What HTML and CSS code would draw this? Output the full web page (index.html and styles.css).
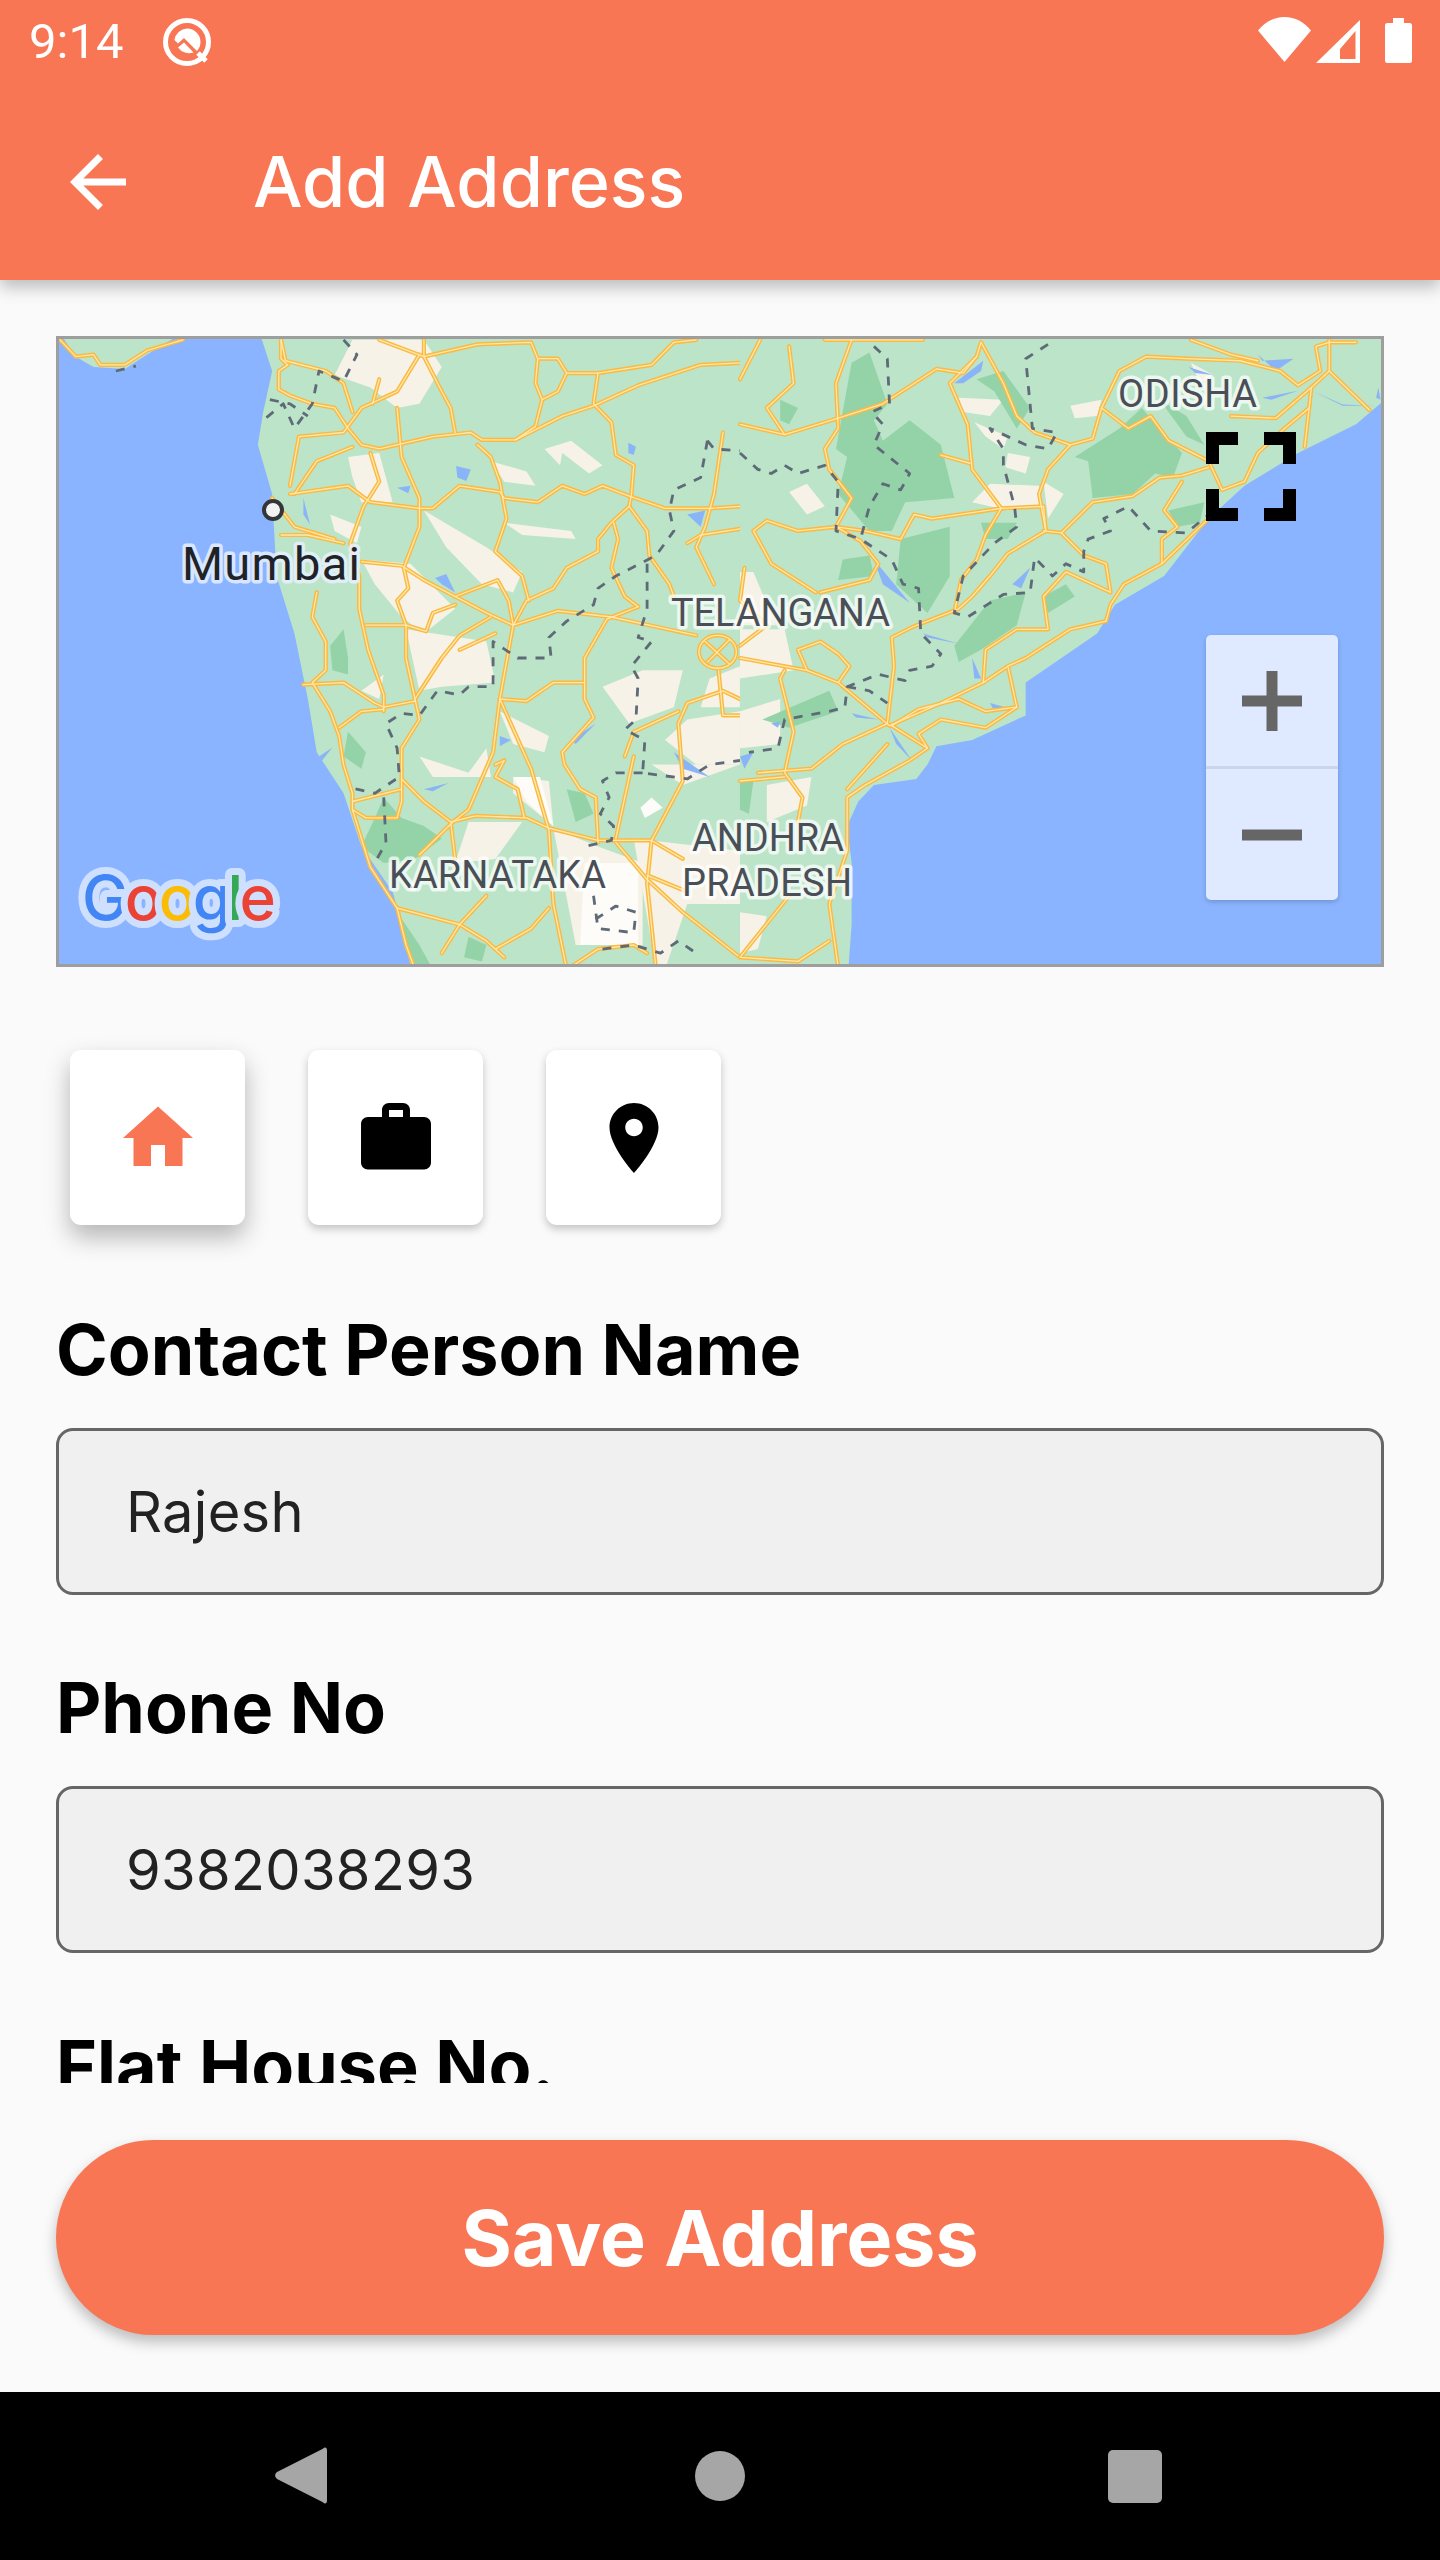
FILE: index.html
```html
<!DOCTYPE html>
<html lang="en">
<head>
<meta charset="utf-8">
<title>Add Address</title>
<link rel="stylesheet" href="styles.css">
</head>
<body>
<div class="screen">
  <header class="topbar">
    <div class="status">
      <div class="status-left">
        <span class="time">9:14</span>
        <svg class="q-icon" viewBox="0 0 50 48"><circle class="q-ring" cx="25" cy="24" r="21.5"/><path class="q-fill" d="M25 10.500a13.500 13.500 0 0 1 13.500 13.500c0 3.500-1.300 6.500-3.500 9L22 20l-6 5.500-3.600-3.600A13.500 13.500 0 0 1 25 10.500z"/><path class="q-fill" d="M22 24.500 31.500 34.500A13.500 13.500 0 0 1 16 29.500z"/><path class="q-tail" d="M36 35 44 43"/></svg>
      </div>
      <div class="status-right">
        <svg class="wifi" viewBox="0 0 53 45"><path d="M0 13.500C7 5 16 0 26.500 0S46 5 53 13.500L26.500 45z"/></svg>
        <svg class="signal" viewBox="0 0 44 43"><path fill-rule="evenodd" d="M44 0v43H0zM39.500 11 24 29v10h15.500z"/></svg>
        <svg class="battery" viewBox="0 0 27 45"><path d="M8 0h11v5h5.500a2.500 2.500 0 0 1 2.500 2.500V42.500a2.500 2.500 0 0 1-2.500 2.500h-22A2.500 2.500 0 0 1 0 42.500V7.500A2.500 2.500 0 0 1 2.500 5H8z"/></svg>
      </div>
    </div>
    <div class="appbar">
      <svg class="back" viewBox="0 0 24 24"><path d="M20 11H7.830l5.590-5.590L12 4l-8 8 8 8 1.410-1.410L7.830 13H20v-2z"/></svg>
      <h1 class="title">Add Address</h1>
    </div>
  </header>

  <main class="content">
    <div class="map">
      <svg class="map-svg" viewBox="59 339 1322 625" preserveAspectRatio="none">
        <defs>
          <g id="roads-left" class="roads">
            <polyline points="540,24 540,70 555,85 535,100 535,145 560,160 610,180 660,190 690,240 720,280 760,290 880,260 965,250 990,268 1065,268 1170,210 1240,185 1340,135 1480,85 1568,80"/>
            <polyline points="860,24 860,65 900,150 920,190 930,250"/>
            <polyline points="760,24 860,65 980,35 1100,30 1115,70 1160,70 1180,105 1160,150 1125,170 1110,235 1065,268"/>
            <polyline points="1115,70 1110,130 1125,170"/>
            <polyline points="1180,105 1250,105 1370,85 1420,30 1470,24"/>
            <polyline points="1250,105 1240,180 1280,225 1290,305 1330,330 1325,400 1320,430 1280,470 1250,510 1250,540 1180,580 1150,630 1090,660 1060,720"/>
            <polyline points="1320,430 1360,490 1365,550 1410,620 1420,650"/>
            <polyline points="1285,470 1295,510 1280,580 1310,650 1340,675"/>
            <polyline points="560,400 690,380 740,420 850,435 880,435 940,380 1030,395 1040,410 1115,420 1170,380 1220,400 1260,380 1320,405 1400,435 1500,435 1568,430"/>
            <polyline points="800,190 810,310 850,410 850,480 815,580 825,630 800,660 820,720 820,800 840,900"/>
            <polyline points="740,300 760,370 725,430 695,520 715,600 715,680 735,780 770,890 770,930"/>
            <polyline points="980,280 1010,310 1030,370 1045,460 1020,540 1080,600 1095,660"/>
            <polyline points="720,565 810,575 860,610 1000,690 1060,720 1160,685 1280,700 1470,745"/>
            <polyline points="930,650 1025,610 1050,660 1060,720 1030,900 1015,1030 960,1170 925,1200 850,1280"/>
            <polyline points="1030,900 1090,905 1150,860 1220,860 1220,900 1240,945 1170,1030 1175,1060 1210,1120 1245,1140 1250,1250"/>
            <polyline points="1340,675 1270,705 1220,800 1220,860"/>
            <polyline points="730,720 820,720 865,735 880,690 930,670"/>
            <polyline points="840,900 900,800 940,745 1010,700"/>
            <polyline points="940,780 1020,740"/>
            <polyline points="590,865 680,860 750,910 770,920 840,905"/>
            <polyline points="620,640 610,700 640,760 640,830 610,860 650,930 670,990 680,1060 700,1130 700,1170 730,1190 800,1190 810,1150 810,1020 850,950 840,900"/>
            <polyline points="770,925 720,930 670,970"/>
            <polyline points="810,1095 860,1150 920,1200 975,1185 1090,1190 1140,1215 1250,1245 1370,1245 1440,1290"/>
            <polyline points="1030,900 1100,1070 1140,1220 1150,1400 1180,1560"/>
            <polyline points="1370,1245 1360,1350 1380,1560"/>
            <polyline points="1370,1245 1440,1100 1430,960 1450,910 1530,880 1568,900"/>
            <polyline points="1310,1040 1330,980 1430,930"/>
            <polyline points="1290,1240 1330,1040"/>
            <polyline points="1450,520 1480,500 1568,485"/>
            <polyline points="1530,250 1510,400 1490,480 1470,530 1510,620"/>
            <polyline points="700,1150 810,1120"/>
            <polyline points="570,400 620,320 700,285"/>
            <polyline points="560,380 580,260 680,250 720,190 800,150 850,60"/>
            <polyline points="540,500 600,500 680,520"/>
            <polyline points="520,410 570,480 660,510"/>
            <polyline points="1520,830 1530,940 1568,940"/>
            <polyline points="700,1170 740,1310 800,1410 820,1500 840,1560"/>
            <polyline points="800,1410 940,1450 1000,1490 1040,1530"/>
            <polyline points="920,1200 930,1290"/>
            <polyline points="1020,1060 1040,1050 1020,1090 1070,1120 1085,1190"/>
            <polyline points="1000,1380 940,1450 900,1520"/>
            <polyline points="1140,1410 1100,1460 1020,1510"/>
            <polyline points="1290,1250 1360,1340 1440,1420 1568,1530"/>
            <polyline points="1450,1370 1360,1330"/>
            <polyline points="45,24 80,65 120,60 135,85 190,85 240,50 320,24"/>
            <polyline points="760,120 745,180"/>
            <polyline points="540,24 550,75 640,100 680,130 700,200"/>
            <ellipse cx="1518" cy="785" rx="42" ry="40"/>
            <polyline points="1490,760 1545,815"/>
            <polyline points="1545,755 1495,810"/>
            <polyline points="1180,1560 1250,1510 1330,1500 1360,1520"/>
          </g>
          <g id="roads-right" class="roads">
            <polyline points="190,24 410,24"/>
            <polyline points="250,24 215,130 220,240 190,290 200,340 250,410 215,480 270,515 310,570 290,610 180,640"/>
            <polyline points="0,230 100,255 220,215 320,180 440,95 500,105 530,65 540,30 590,130 620,210 660,250 740,280 690,340 670,400 685,490 600,545 560,600 520,650 490,680 385,725 340,750 345,820 330,960 230,1010 160,1070 40,1080"/>
            <polyline points="530,65 470,130 510,230 520,340 585,435 680,430 685,490"/>
            <polyline points="585,435 430,460 390,450 360,510 280,490 215,480 130,490 60,465 30,490 70,570 170,640"/>
            <polyline points="585,435 550,500 530,560 495,610 480,690"/>
            <polyline points="740,280 790,265 810,190 850,100 910,65 1000,70 1120,75 1210,100 1250,135 1300,100 1290,40 1320,30 1380,30"/>
            <polyline points="810,190 870,240 920,210 960,270 1050,320 1080,390 1130,370 1160,300 1220,240 1275,190 1280,140"/>
            <polyline points="1010,24 1100,60 1160,75"/>
            <polyline points="1320,100 1280,140 1200,215 1100,210"/>
            <polyline points="1320,100 1410,195"/>
            <polyline points="1320,100 1320,24"/>
            <polyline points="1275,190 1265,285"/>
            <polyline points="680,490 720,495 790,420 880,405 940,360 990,355 1050,335"/>
            <polyline points="990,370 950,440 980,480 945,510 945,570"/>
            <polyline points="1050,460 945,570 860,620 830,670 820,710 740,730 640,800 600,820 545,860 450,910 335,965"/>
            <polyline points="720,495 770,550 820,570 830,640 730,590 680,650 690,730 620,730 550,780 545,860"/>
            <polyline points="600,820 620,920 550,970 450,950 400,985 420,1020 380,1050 280,1110 240,1140 240,1270 200,1400 220,1555"/>
            <polyline points="620,920 550,930 490,900 400,925 340,965 420,1020"/>
            <polyline points="335,965 220,860 150,830 130,780 180,760 220,790 245,820 220,860"/>
            <polyline points="0,800 150,830"/>
            <polyline points="330,1010 240,1120"/>
            <polyline points="100,830 90,850 120,980 100,1080 140,1140 130,1200"/>
            <polyline points="0,1100 100,1090"/>
            <polyline points="45,24 0,120"/>
            <polyline points="110,40 120,130 60,190 100,255"/>
            <polyline points="10,580 0,660 60,720 0,770"/>
            <polyline points="450,305 515,325"/>
            <polyline points="110,1380 0,1530 130,1540 200,1490"/>
          </g>
        </defs>

        <rect class="sea" x="59" y="339" width="1322" height="625"/>

        <g transform="matrix(.4464 0 0 .41 40 330)">
          <polygon class="land" points="490,0 520,100 500,200 488,280 520,400 530,600 570,740 600,900 620,1030 680,1130 720,1260 790,1370 810,1450 840,1600 1568,1600 1568,0"/>
          <polygon class="land" points="40,0 80,65 120,90 190,95 240,60 330,0"/>
          <g class="beige">
            <polygon points="700,24 860,24 900,90 850,180 800,190 740,140 660,110"/>
            <polygon points="690,310 760,300 790,420 720,420 700,360"/>
            <polygon points="1130,290 1190,270 1260,330 1230,350 1170,300 1165,330"/>
            <polygon points="1010,320 1090,345 1110,380 1040,370"/>
            <polygon points="860,440 1000,530 1080,590 1060,640 990,620 910,530"/>
            <polygon points="1040,470 1190,490 1200,510 1080,500"/>
            <polygon points="720,560 830,570 930,680 860,740 810,700 750,620"/>
            <polygon points="820,730 1000,760 1020,860 900,870 850,880"/>
            <polygon points="1260,870 1350,830 1440,830 1420,920 1320,960"/>
            <polygon points="1030,930 1140,990 1130,1030 1060,1010"/>
            <polygon points="850,1040 960,1080 1000,1020 1010,1090 880,1090"/>
            <polygon points="1060,1090 1140,1100 1150,1210 1060,1130"/>
            <polygon points="1150,1215 1250,1260 1350,1300 1350,1500 1200,1500"/>
            <polygon points="1400,1000 1450,950 1568,930 1568,1060 1470,1060"/>
            <polygon points="1500,850 1568,820 1568,920 1480,920"/>
            <polygon points="650,450 720,480 710,520 660,490"/>
            <polygon points="720,880 770,840 760,900"/>
            <polygon points="1330,1240 1568,1270 1568,1400 1450,1400 1400,1560 1380,1560"/>
            <polygon points="960,1200 1080,1200 1020,1290 930,1300"/>
            <polygon points="1370,1060 1450,1060 1568,1060 1440,1110"/>
          </g>
          <polygon class="white" points="1060,1090 1120,1090 1150,1210 1090,1150"/>
          <polygon class="white" points="1220,1300 1340,1300 1340,1500 1210,1500"/>
          <polygon class="white" points="1370,1140 1395,1165 1355,1190 1345,1165"/>
          <g class="forest">
            <polygon points="680,730 690,800 690,840 655,830 650,770"/>
            <polygon points="690,980 730,1030 720,1070 680,1040"/>
            <polygon points="770,1140 810,1190 860,1210 900,1240 840,1290 770,1300 720,1260 750,1190"/>
            <polygon points="800,1420 850,1500 880,1560 840,1560"/>
            <polygon points="960,1480 1000,1500 990,1540 950,1530"/>
            <polygon points="1180,1120 1220,1130 1240,1180 1200,1200"/>
          </g>
          <g class="water">
            <polygon points="932,332 965,340 955,368 935,360"/>
            <polygon points="1318,275 1335,285 1330,305 1318,300"/>
            <polygon points="800,385 830,380 825,398"/>
            <polygon points="590,410 605,475 590,450"/>
            <polygon points="1450,450 1490,440 1480,480"/>
            <polygon points="885,605 910,595 930,640 900,620"/>
            <polygon points="860,1120 915,1105 880,1125"/>
            <polygon points="1030,990 1055,1000 1030,1015"/>
            <polygon points="1420,1030 1500,1090 1440,1070"/>
            <polygon points="1190,1000 1245,960 1200,1010"/>
            <polygon points="625,1040 655,1018 632,1050"/>
          </g>
          <use href="#roads-left" class="road-casing"/>
          <use href="#roads-left" class="road-core"/>
          <g class="border-line">
            <polyline points="680,24 710,60 680,125 625,100 610,180 570,240 545,180 500,220"/>
            <polyline points="515,170 560,180 600,210"/>
            <polyline points="1495,270 1510,290 1568,295"/>
            <polyline points="1495,270 1480,360 1420,390 1410,440 1420,490 1380,550 1290,600 1250,630 1240,670 1180,710 1140,750 1145,800 1070,800 1015,760 1015,870 960,870 940,890 890,880 850,940 810,935 775,960 800,1020 805,1090 750,1130 690,1115"/>
            <polyline points="1360,570 1360,680 1340,750 1370,760 1325,820 1340,850 1335,950 1310,975 1355,1000 1350,1080 1450,1095 1500,1060 1568,1050"/>
            <polyline points="1350,1080 1290,1080 1260,1100 1275,1140 1255,1180 1285,1210 1280,1245 1220,1260"/>
            <polyline points="770,1140 775,1250 750,1300"/>
            <polyline points="1240,1380 1250,1460 1330,1470 1335,1420 1290,1405 1240,1440"/>
            <polyline points="1260,1510 1330,1500 1390,1520 1430,1490 1470,1520"/>
            <polyline points="170,100 215,88"/>
          </g>
        </g>

        <g transform="matrix(.4464 0 0 .41 740 330)">
          <polygon class="land" points="0,0 1450,0 1450,1600 0,1600"/>
          <polygon class="sea" points="1450,165 1380,230 1250,300 1130,380 1050,460 950,600 840,670 800,740 640,860 640,940 520,1000 440,1015 420,1060 395,1095 300,1110 265,1150 240,1210 250,1300 250,1450 240,1600 1450,1600"/>
          <g class="beige">
            <polygon points="740,185 810,170 800,210 750,215"/>
            <polygon points="490,165 590,170 560,210 500,200"/>
            <polygon points="525,225 600,260 590,290 550,260"/>
            <polygon points="600,300 650,310 640,350 595,335"/>
            <polygon points="520,420 560,375 670,380 680,430 600,440"/>
            <polygon points="680,370 725,400 690,460"/>
            <polygon points="110,395 150,375 190,430 150,450"/>
            <polygon points="0,590 30,590 80,720 0,720"/>
            <polygon points="0,730 100,730 120,830 0,850"/>
            <polygon points="0,930 90,900 90,1010 0,1020"/>
            <polygon points="60,1110 160,1090 150,1160 60,1200"/>
            <polygon points="0,1420 60,1430 40,1510 0,1520"/>
            <polygon points="1010,80 1060,110 1030,130"/>
          </g>
          <g class="forest">
            <polygon points="250,80 290,55 330,180 300,220 320,270 380,220 450,280 480,410 370,420 340,490 290,490 220,400 240,310 215,290"/>
            <polygon points="530,120 590,100 650,190 620,240 570,150"/>
            <polygon points="850,240 900,190 990,300 970,360 930,350 880,400 790,410 780,320 750,310"/>
            <polygon points="480,770 560,660 640,640 620,720 540,780 490,810"/>
            <polygon points="360,510 470,480 470,600 420,690 350,620"/>
            <polygon points="230,560 290,550 300,600 220,610"/>
            <polygon points="540,470 620,470 600,510 550,510"/>
            <polygon points="680,650 730,620 750,650 690,690"/>
            <polygon points="90,170 130,190 110,230 90,220"/>
            <polygon points="0,1100 30,1100 20,1180 0,1170"/>
            <polygon points="960,440 1040,420 1030,470 980,480"/>
            <polygon points="50,950 200,880 220,930 110,970"/>
            <polygon points="940,170 1000,210 1040,280 1000,260"/>
          </g>
          <g class="water">
            <polygon points="480,130 545,75 540,100 500,130"/>
            <polygon points="300,560 380,665 320,620"/>
            <polygon points="610,620 650,580 630,630"/>
            <polygon points="520,800 540,850 525,850"/>
            <polygon points="250,935 310,950 260,945"/>
            <polygon points="335,970 385,1050 350,1010"/>
            <polygon points="1170,165 1250,148 1190,170"/>
            <polygon points="1285,150 1350,182 1420,185 1350,185"/>
            <polygon points="1160,60 1170,75 1240,70 1200,100"/>
            <polygon points="1005,90 1060,110 1020,105"/>
            <polygon points="1430,140 1435,170 1425,165"/>
            <polygon points="410,740 490,765 420,750"/>
            <polygon points="70,960 90,955 85,970"/>
            <polygon points="0,1040 30,1030 10,1070"/>
            <polygon points="560,910 610,925 570,930"/>
          </g>
          <use href="#roads-right" class="road-casing"/>
          <use href="#roads-right" class="road-core"/>
          <g class="border-line">
            <polyline points="300,40 330,70 335,180 295,200 320,230 300,280 380,350 360,390 320,375 290,430 270,510 340,560 365,620 400,630 405,740 450,790 430,820 380,830 370,855 310,840 240,870 235,920 200,930 100,950 85,1020 20,1030"/>
            <polyline points="0,300 40,340 70,350 100,330 130,350 190,330 220,370 215,490 270,510"/>
            <polyline points="690,35 640,70 655,240 710,250 690,290 640,280 560,240 590,290 590,330 615,430 620,480 570,520 500,600 480,690 510,700 590,645 650,640 660,555 700,600 730,570 770,590 770,540 780,510 830,490 815,460 870,430 920,490 1000,495 1050,450"/>
            <polyline points="240,870 290,880 330,910"/>
          </g>
        </g>

        <g class="label-sm">
          <text x="671" y="626" textLength="219">TELANGANA</text>
          <text x="389" y="888" textLength="217">KARNATAKA</text>
          <text x="1118" y="407" textLength="139">ODISHA</text>
          <text x="692" y="851" textLength="152">ANDHRA</text>
          <text x="682" y="896" textLength="170">PRADESH</text>
        </g>
        <circle class="city-dot" cx="273" cy="510" r="9"/>
        <text class="label-lg" x="182" y="580" textLength="178">Mumbai</text>
        <text class="google" x="82" y="920" textLength="194"><tspan class="g-blue">G</tspan><tspan class="g-red">o</tspan><tspan class="g-yellow">o</tspan><tspan class="g-blue">g</tspan><tspan class="g-green">l</tspan><tspan class="g-red">e</tspan></text>
      </svg>

      <svg class="fullscreen" viewBox="0 0 90 89"><path d="M0 0h32v13H13v19H0zM58 0h32v32H77V13H58zM0 57h13v19h19v13H0zM77 57h13v32H58V76h19z"/></svg>

      <div class="zoom-ctrl">
        <div class="zoom-btn"><svg class="zoom-glyph" viewBox="0 0 60 60"><path d="M24.500 0h11v24.500H60v11H35.500V60h-11V35.500H0v-11h24.500z"/></svg></div>
        <div class="zoom-btn"><svg class="zoom-glyph" viewBox="0 0 60 60"><path d="M0 24.500h60v11H0z"/></svg></div>
      </div>
    </div>

    <div class="types">
      <button class="type type-active"><svg class="type-icon icon-orange" viewBox="0 0 24 24"><path d="M10 20v-6h4v6h5v-8h3L12 3 2 12h3v8z"/></svg></button>
      <button class="type"><svg class="type-icon" viewBox="0 0 24 24"><path d="M20 6h-4V4c0-1.110-.89-2-2-2h-4c-1.110 0-2 .89-2 2v2H4c-1.110 0-1.990.89-1.990 2L2 19c0 1.110.89 2 2 2h16c1.110 0 2-.89 2-2V8c0-1.110-.89-2-2-2zm-6 0h-4V4h4v2z"/></svg></button>
      <button class="type"><svg class="type-icon" viewBox="0 0 24 24"><path d="M12 2C8.130 2 5 5.130 5 9c0 5.250 7 13 7 13s7-7.750 7-13c0-3.870-3.130-7-7-7zm0 9.500c-1.380 0-2.500-1.120-2.500-2.500s1.120-2.500 2.500-2.500 2.500 1.120 2.500 2.500-1.120 2.500-2.500 2.500z"/></svg></button>
    </div>

    <section class="field">
      <h2 class="field-label">Contact Person Name</h2>
      <div class="input">Rajesh</div>
    </section>
    <section class="field">
      <h2 class="field-label">Phone No</h2>
      <div class="input">9382038293</div>
    </section>
    <section class="field">
      <h2 class="field-label">Flat House No.</h2>
    </section>
  </main>

  <div class="action">
    <button class="save">Save Address</button>
  </div>

  <nav class="navbar">
    <svg class="nav-back" viewBox="0 0 51 50" preserveAspectRatio="none"><path d="M47 1.500c2-2 4-1 4 1.500v44c0 2.500-2 3.500-4 1.500L2 28c-2.500-1.800-2.500-4.200 0-6z"/></svg>
    <span class="nav-home"></span>
    <span class="nav-recent"></span>
  </nav>
</div>
</body>
</html>
```

FILE: styles.css
```css
* { box-sizing: border-box; }
html, body { margin: 0; padding: 0; }
body { width: 1440px; height: 2560px; overflow: hidden; background: #fafafa; font-family: Inter, "Noto Sans", sans-serif; }
svg { display: block; fill: currentColor; }

.screen { width: 1440px; height: 2560px; display: flex; flex-direction: column; background: #fafafa; }

.topbar { position: relative; z-index: 2; height: 280px; flex: none; background: #f87654; color: #fff; box-shadow: 0 7px 16px rgba(0, 0, 0, .26); }
.status { height: 84px; display: flex; justify-content: space-between; align-items: center; padding: 0 28px 0 29px; }
.status-left { display: flex; align-items: center; gap: 39px; }
.time { font-family: Roboto, sans-serif; font-size: 49px; line-height: 84px; color: #fff; }
.q-icon { width: 50px; height: 48px; }
.q-ring { fill: none; stroke: #fff; stroke-width: 5; }
.q-fill { fill: #fff; }
.q-tail { fill: none; stroke: #fff; stroke-width: 5; }
.status-right { display: flex; align-items: flex-start; }
.wifi { width: 53px; height: 45px; margin-top: -4px; }
.signal { width: 44px; height: 43px; margin: -1px 0 0 5px; }
.battery { width: 27px; height: 45px; margin: -3px 0 0 25px; }

.appbar { height: 196px; display: flex; align-items: center; padding-left: 56px; }
.back { width: 84px; height: 84px; }
.title { margin: 0 0 0 113px; font-size: 70px; font-weight: 500; line-height: 84px; color: #fff; }

.content { height: 1803px; flex: none; overflow: hidden; padding: 56px 56px 0; }

.map { position: relative; height: 631px; border: 3px solid #9e9e9e; }
.map-svg { width: 100%; height: 100%; }
.sea { fill: #8ab4ff; }
.land { fill: #bbe4c8; }
.beige polygon { fill: #f6f2e7; }
.white { fill: #fdfcf8; }
.forest polygon { fill: #94d3a8; }
.water polygon { fill: #8ab4f8; }
.road-casing, .road-core, .border-line { fill: none; stroke-linejoin: round; stroke-linecap: round; }
.road-casing { stroke: #fcb93f; stroke-width: 4.200; }
.road-core { stroke: #fee9b0; stroke-width: 1.300; }
.roads polyline, .roads ellipse, .border-line polyline { vector-effect: non-scaling-stroke; }
.border-line { stroke: #5f6a78; stroke-width: 2.800; stroke-dasharray: 9 9; stroke-linecap: butt; }
.label-sm text { font-family: Roboto, sans-serif; font-size: 38px; fill: #4a4f57; stroke: rgba(255, 255, 255, .72); stroke-width: 7px; paint-order: stroke; stroke-linejoin: round; }
.label-lg { font-family: Roboto, sans-serif; font-size: 47px; fill: #1f2328; stroke: rgba(232, 240, 255, .85); stroke-width: 7px; paint-order: stroke; stroke-linejoin: round; }
.city-dot { fill: #f3f3f3; stroke: #33363b; stroke-width: 4; }
.google { font-family: Inter, Roboto, sans-serif; font-size: 62px; font-weight: 500; stroke: #cfe0ff; stroke-width: 14px; paint-order: stroke; stroke-linejoin: round; }
.g-blue { fill: #4285f4; }
.g-red { fill: #ea4335; }
.g-yellow { fill: #fbbc05; }
.g-green { fill: #34a853; }

.fullscreen { position: absolute; left: 1147px; top: 93px; width: 90px; height: 89px; color: #000; }
.zoom-ctrl { position: absolute; left: 1147px; top: 296px; width: 132px; height: 265px; display: flex; flex-direction: column; background: #dfe9ff; border-radius: 5px; box-shadow: 0 2px 5px rgba(0, 0, 0, .18); overflow: hidden; }
.zoom-btn { flex: 1; display: flex; align-items: center; justify-content: center; color: #666; }
.zoom-btn + .zoom-btn { border-top: 3px solid #c9d5ec; }
.zoom-glyph { width: 60px; height: 60px; }

.types { display: flex; gap: 63px; margin: 83px 0 0 14px; height: 175px; }
.type { width: 175px; height: 175px; padding: 0; border: 0; border-radius: 11px; background: #fff; display: flex; align-items: center; justify-content: center; color: #000; box-shadow: 0 4px 9px rgba(0, 0, 0, .22); }
.type-active { box-shadow: 0 12px 24px rgba(0, 0, 0, .28); }
.type-icon { width: 84px; height: 84px; }
.icon-orange { color: #f87654; }

.field { margin: 0; }
.field-label { margin: 0; font-size: 70px; font-weight: 700; line-height: 86px; color: #000; }
.types + .field { margin-top: 82px; }
.field + .field { margin-top: 70px; }
.field-label + .input { margin-top: 35px; }
.input { height: 167px; border: 3.500px solid #666; border-radius: 17px; background: #f0f0f0; padding-left: 67px; display: flex; align-items: center; font-size: 56px; font-weight: 400; color: #222; letter-spacing: .3px; }

.action { height: 309px; flex: none; padding: 57px 56px 0; }
.save { display: block; width: 1328px; height: 195px; border: 0; border-radius: 98px; background: #f87654; color: #fff; font-family: Inter, sans-serif; font-size: 77px; font-weight: 700; box-shadow: 0 7px 14px rgba(0, 0, 0, .25); }

.navbar { position: relative; height: 168px; flex: none; background: #000; }
.nav-back { position: absolute; left: 275px; top: 55px; width: 52px; height: 57px; color: #a6a6a6; }
.nav-home { position: absolute; left: 695px; top: 59px; width: 50px; height: 50px; border-radius: 50%; background: #a6a6a6; }
.nav-recent { position: absolute; left: 1108px; top: 58px; width: 54px; height: 53px; border-radius: 5px; background: #a6a6a6; }
```
